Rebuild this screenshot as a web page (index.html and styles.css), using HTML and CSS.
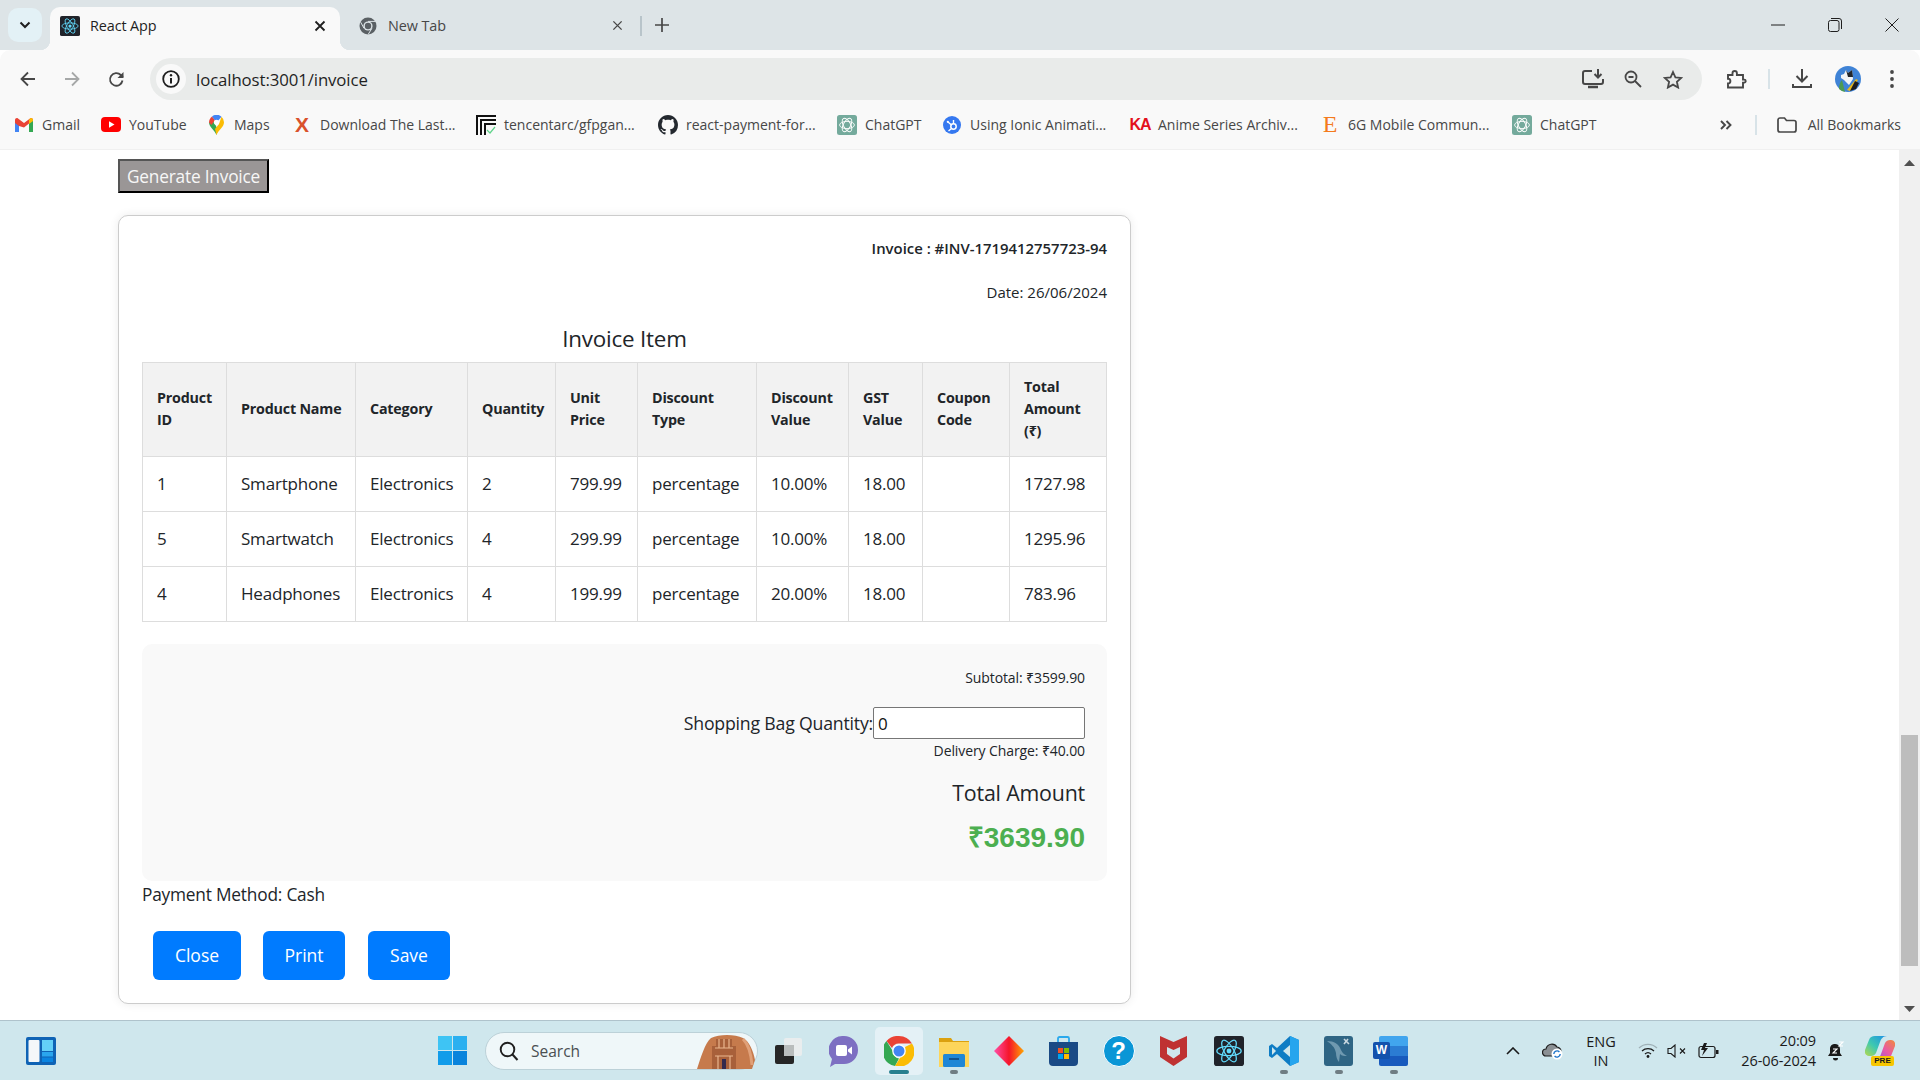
FILE: index.html
```html
<!DOCTYPE html>
<html lang="en">
<head>
<meta charset="utf-8">
<title>React App</title>
<link rel="stylesheet" href="styles.css">
</head>
<body>
<svg class="defs" width="0" height="0" aria-hidden="true">
  <symbol id="atom" viewBox="0 0 32 32">
    <rect width="32" height="32" rx="3" fill="#20232a"/>
    <g fill="none" stroke="#61dafb" stroke-width="1.3">
      <ellipse cx="16" cy="16" rx="13" ry="5"/>
      <ellipse cx="16" cy="16" rx="13" ry="5" transform="rotate(60 16 16)"/>
      <ellipse cx="16" cy="16" rx="13" ry="5" transform="rotate(120 16 16)"/>
    </g>
    <circle cx="16" cy="16" r="2.6" fill="#61dafb"/>
  </symbol>
  <symbol id="gpt" viewBox="0 0 20 20">
    <rect width="20" height="20" rx="2.5" fill="#74aa9c"/>
    <g fill="none" stroke="#fff" stroke-width=".9">
      <ellipse cx="10" cy="10" rx="7.4" ry="3.6"/>
      <ellipse cx="10" cy="10" rx="7.4" ry="3.6" transform="rotate(60 10 10)"/>
      <ellipse cx="10" cy="10" rx="7.4" ry="3.6" transform="rotate(120 10 10)"/>
    </g>
  </symbol>
</svg>

<header class="tabstrip">
  <div class="tab-menu">
    <svg width="12" height="8" viewBox="0 0 12 8"><path d="M1.5 1.5 6 6l4.5-4.5" fill="none" stroke="#1f1f1f" stroke-width="2"/></svg>
  </div>
  <div class="tab tab-active">
    <svg class="fav" width="20" height="20"><use href="#atom"/></svg>
    <span class="tab-title">React App</span>
    <svg class="tab-x" width="12" height="12" viewBox="0 0 12 12"><path d="M1.5 1.5l9 9m0-9-9 9" stroke="#1f1f1f" stroke-width="1.8"/></svg>
  </div>
  <div class="tab tab-idle">
    <svg class="fav" width="18" height="18" viewBox="0 0 18 18"><circle cx="9" cy="9" r="8.5" fill="#5a6064"/><circle cx="9" cy="9" r="4.6" fill="#dde4e7"/><circle cx="9" cy="9" r="3.2" fill="#5a6064"/><path d="M9 4.4h7.5M5 11.3 1.7 5.2M12.9 11.4l-3.800 6.100" stroke="#dde4e7" stroke-width="1"/></svg>
    <span class="tab-title tab-title-idle">New Tab</span>
    <svg class="tab-x" width="11" height="11" viewBox="0 0 12 12"><path d="M1.5 1.5l9 9m0-9-9 9" stroke="#474747" stroke-width="1.5"/></svg>
  </div>
  <span class="tab-sep"></span>
  <svg class="tab-plus" width="14" height="14" viewBox="0 0 14 14"><path d="M7 0v14M0 7h14" stroke="#474747" stroke-width="1.7"/></svg>
  <div class="win-controls">
    <span class="win-btn"><svg width="14" height="2" viewBox="0 0 14 2"><path d="M0 1h14" stroke="#1f1f1f" stroke-width="1"/></svg></span>
    <span class="win-btn"><svg width="14" height="14" viewBox="0 0 14 14"><rect x=".5" y="2.5" width="10.5" height="11" rx="2" fill="none" stroke="#1f1f1f"/><path d="M3 .5h8a2.5 2.5 0 0 1 2.5 2.5v8" fill="none" stroke="#1f1f1f"/></svg></span>
    <span class="win-btn"><svg width="14" height="14" viewBox="0 0 14 14"><path d="M.5.5l13 13m0-13-13 13" stroke="#1f1f1f" stroke-width="1"/></svg></span>
  </div>
</header>

<nav class="toolbar">
  <span class="tool"><svg width="16" height="16" viewBox="0 0 16 16"><path d="M15 8H2M8 1.5 1.5 8 8 14.5" fill="none" stroke="#474747" stroke-width="1.8"/></svg></span>
  <span class="tool"><svg width="16" height="16" viewBox="0 0 16 16"><path d="M1 8h13M8 1.5 14.5 8 8 14.5" fill="none" stroke="#a6a8a8" stroke-width="1.8"/></svg></span>
  <span class="tool"><svg width="17" height="17" viewBox="0 0 17 17"><path d="M14.5 9.5A6.300 6.300 0 1 1 12.800 4L15 6" fill="none" stroke="#474747" stroke-width="1.8"/><path d="M15.5 1v6h-6z" fill="#474747"/></svg></span>
  <div class="omnibox">
    <span class="omni-info"><svg width="18" height="18" viewBox="0 0 18 18"><circle cx="9" cy="9" r="7.8" fill="none" stroke="#1f1f1f" stroke-width="1.8"/><path d="M9 8v5.5" stroke="#1f1f1f" stroke-width="2"/><circle cx="9" cy="5.3" r="1.2" fill="#1f1f1f"/></svg></span>
    <span class="omni-url">localhost:3001/invoice</span>
    <div class="omni-actions">
      <span class="omni-act"><svg width="22" height="20" viewBox="0 0 22 20"><path d="M10 2H3a2 2 0 0 0-2 2v9a2 2 0 0 0 2 2h16a2 2 0 0 0 2-2v-3" fill="none" stroke="#474747" stroke-width="2"/><path d="M6 18h10" stroke="#474747" stroke-width="2.5"/><path d="M16 0v8M12.5 5l3.500 3.500L19.5 5" fill="none" stroke="#474747" stroke-width="2"/></svg></span>
      <span class="omni-act"><svg width="18" height="18" viewBox="0 0 18 18"><circle cx="7" cy="7" r="5.5" fill="none" stroke="#474747" stroke-width="1.8"/><path d="M4.5 7h5M11 11l6 6" stroke="#474747" stroke-width="1.8"/></svg></span>
      <span class="omni-act"><svg width="20" height="19" viewBox="0 0 20 19"><path d="m10 2 2.400 5.300 5.800.6-4.300 3.900 1.200 5.700L10 14.600l-5.100 2.900 1.200-5.700L1.800 7.900l5.800-.6z" fill="none" stroke="#474747" stroke-width="1.8"/></svg></span>
    </div>
  </div>
  <span class="tool tool-ext"><svg width="21" height="20" viewBox="0 0 21 20"><path d="M2 6h4.500V4.200a2.200 2.200 0 0 1 4.400 0V6H17v4.600h1.200a1.500 1.500 0 0 1 0 3H17v4.900H2v-4a2.400 2.400 0 0 0 0-4.800z" fill="none" stroke="#474747" stroke-width="1.9"/></svg></span>
  <span class="tool-sep"></span>
  <span class="tool tool-dl"><svg width="20" height="20" viewBox="0 0 20 20"><path d="M10 0v12M4.5 7l5.500 5.500L15.5 7" fill="none" stroke="#474747" stroke-width="2"/><path d="M1 15v3h18v-3" fill="none" stroke="#474747" stroke-width="2"/></svg></span>
  <span class="tool tool-av"><svg width="26" height="26" viewBox="0 0 26 26"><circle cx="13" cy="13" r="13" fill="#3f83d6"/><path d="M4 23c0-4 1-7 3-9l3 12a13 13 0 0 1-6-3z" fill="#4d9a52"/><path d="M6 9l3-1 2-4 2 3 4-3 1 9-4 6-5-5-3-2z" fill="#f2f4f6"/><path d="M11 4l2 3 4-3 1 7-5 0z" fill="#23262b"/><path d="M12 24l9-11 2 1-8 11z" fill="#e8b91c"/><path d="M20 15l4 2-3 6-6 2z" fill="#1d1d20"/></svg></span>
  <span class="tool tool-more"><svg width="4" height="18" viewBox="0 0 4 18"><circle cx="2" cy="2" r="1.9" fill="#474747"/><circle cx="2" cy="9" r="1.9" fill="#474747"/><circle cx="2" cy="16" r="1.9" fill="#474747"/></svg></span>
</nav>

<nav class="bookmarks">
  <div class="bm-list">
    <a class="bm"><span class="bm-ico"><svg width="18" height="14" viewBox="0 0 18 14"><path fill="#4285f4" d="M0 14V2l4 3v9z"/><path fill="#34a853" d="M14 14V5l4-3v12z"/><path fill="#ea4335" d="M4 8 0 5V2C0 .4 1.800-.5 3 .5l6 4.500 6-4.500c1.200-1 3-.1 3 1.500v.5l-4 3-5 4z"/><path fill="#fbbc04" d="M14 2l1-1.500C16.200-.5 18 .4 18 2v1l-4 3z"/></svg></span><span>Gmail</span></a>
    <a class="bm"><span class="bm-ico"><svg width="20" height="15" viewBox="0 0 20 15"><rect width="20" height="15" rx="4" fill="#f00"/><path d="M8 4.3v6.400l5.500-3.200z" fill="#fff"/></svg></span><span>YouTube</span></a>
    <a class="bm"><span class="bm-ico"><svg width="15" height="20" viewBox="0 0 15 20"><path d="M7.5 20C6 15.500 0 12 0 7.200L4 5l4.500 9z" fill="#34a853"/><path d="M0 7.5A7.500 7.500 0 0 1 3 1.500L6 5 2.500 10z" fill="#ea4335"/><path d="M3 1.5A7.500 7.500 0 0 1 12.500 1.700L7.500 7.500z" fill="#4285f4"/><path d="M12.5 1.7A7.500 7.500 0 0 1 15 7.200C15 12 9 15.500 7.500 20L6 14l4-5z" fill="#fbbc04"/><circle cx="7.5" cy="7.3" r="2.6" fill="#fff"/></svg></span><span>Maps</span></a>
    <a class="bm"><span class="bm-ico fav-x">X</span><span>Download The Last...</span></a>
    <a class="bm"><span class="bm-ico"><svg width="20" height="20" viewBox="0 0 20 20"><path d="M0 20V0h20v2H2v18zM4 20V4h16v2H6v14zM8 20V8h12v2h-10v10z" fill="#111"/><path d="M11 15l3 3 5-6" fill="none" stroke="#5fd38a" stroke-width="1.2"/></svg></span><span>tencentarc/gfpgan...</span></a>
    <a class="bm"><span class="bm-ico"><svg width="20" height="20" viewBox="0 0 16 16"><path fill="#24292f" d="M8 0C3.580 0 0 3.580 0 8c0 3.540 2.290 6.530 5.470 7.590.4.070.55-.17.55-.38 0-.19-.01-.82-.01-1.490-2.010.37-2.530-.49-2.690-.94-.09-.23-.48-.94-.82-1.130-.28-.15-.68-.52-.01-.53.63-.01 1.080.58 1.230.82.72 1.210 1.870.87 2.330.66.070-.52.28-.87.51-1.070-1.780-.2-3.640-.89-3.640-3.950 0-.87.31-1.590.82-2.150-.08-.2-.36-1.020.08-2.120 0 0 .67-.21 2.200.82.64-.18 1.320-.27 2-.27.68 0 1.360.09 2 .27 1.530-1.040 2.200-.82 2.200-.82.44 1.100.16 1.920.08 2.120.51.56.82 1.270.82 2.150 0 3.070-1.870 3.750-3.650 3.950.29.25.54.73.54 1.480 0 1.070-.01 1.930-.01 2.200 0 .21.15.46.55.38A8.013 8.013 0 0 0 16 8c0-4.420-3.580-8-8-8z"/></svg></span><span>react-payment-for...</span></a>
    <a class="bm"><span class="bm-ico"><svg width="20" height="20"><use href="#gpt"/></svg></span><span>ChatGPT</span></a>
    <a class="bm"><span class="bm-ico"><svg width="18" height="18" viewBox="0 0 18 18"><circle cx="9" cy="9" r="9" fill="#3578f0"/><circle cx="10.5" cy="10.5" r="2.7" fill="none" stroke="#fff" stroke-width="1.5"/><path d="M10.500 8V4M8.500 12.500 5.500 15M8.500 9l-3.500-3" stroke="#fff" stroke-width="1.4"/><circle cx="4.8" cy="5.8" r="1.1" fill="#fff"/></svg></span><span>Using Ionic Animati...</span></a>
    <a class="bm"><span class="bm-ico fav-ka">KA</span><span>Anime Series Archiv...</span></a>
    <a class="bm"><span class="bm-ico fav-e">E</span><span>6G Mobile Commun...</span></a>
    <a class="bm"><span class="bm-ico"><svg width="20" height="20"><use href="#gpt"/></svg></span><span>ChatGPT</span></a>
  </div>
  <svg class="bm-more" width="12" height="10" viewBox="0 0 12 10"><path d="M1 1l4 4-4 4M6.500 1l4 4-4 4" fill="none" stroke="#474747" stroke-width="1.9"/></svg>
  <span class="bm-sep"></span>
  <a class="bm bm-all"><svg width="20" height="16" viewBox="0 0 20 16"><path d="M1 3a2 2 0 0 1 2-2h4.500l2 2.500H17a2 2 0 0 1 2 2V13a2 2 0 0 1-2 2H3a2 2 0 0 1-2-2z" fill="none" stroke="#474747" stroke-width="1.7"/></svg><span>All Bookmarks</span></a>
</nav>

<main class="viewport">
  <div class="page">
    <button class="gen-btn" type="button">Generate Invoice</button>
    <section class="card">
      <p class="inv-no">Invoice : #INV-1719412757723-94</p>
      <p class="inv-date">Date: 26/06/2024</p>
      <h2 class="inv-title">Invoice Item</h2>
      <table class="items">
        <colgroup>
          <col class="c1"><col class="c2"><col class="c3"><col class="c4"><col class="c5"><col class="c6"><col class="c7"><col class="c8"><col class="c9"><col class="c10">
        </colgroup>
        <thead>
          <tr><th>Product ID</th><th>Product Name</th><th>Category</th><th>Quantity</th><th>Unit Price</th><th>Discount Type</th><th>Discount Value</th><th>GST Value</th><th>Coupon Code</th><th>Total Amount (₹)</th></tr>
        </thead>
        <tbody>
          <tr><td>1</td><td>Smartphone</td><td>Electronics</td><td>2</td><td>799.99</td><td>percentage</td><td>10.00%</td><td>18.00</td><td></td><td>1727.98</td></tr>
          <tr><td>5</td><td>Smartwatch</td><td>Electronics</td><td>4</td><td>299.99</td><td>percentage</td><td>10.00%</td><td>18.00</td><td></td><td>1295.96</td></tr>
          <tr><td>4</td><td>Headphones</td><td>Electronics</td><td>4</td><td>199.99</td><td>percentage</td><td>20.00%</td><td>18.00</td><td></td><td>783.96</td></tr>
        </tbody>
      </table>
      <div class="summary">
        <p class="sum-sub">Subtotal: ₹3599.90</p>
        <label class="sum-bag">Shopping Bag Quantity:<input class="bag-input" type="text" value="0"></label>
        <p class="sum-del">Delivery Charge: ₹40.00</p>
        <p class="sum-total">Total Amount</p>
        <p class="sum-amount">₹3639.90</p>
      </div>
      <p class="pay">Payment Method: Cash</p>
      <div class="actions">
        <button class="act act-close" type="button">Close</button>
        <button class="act act-print" type="button">Print</button>
        <button class="act act-save" type="button">Save</button>
      </div>
    </section>
  </div>
  <aside class="scrollbar">
    <svg class="sb-up" width="11" height="6" viewBox="0 0 11 6"><path d="M5.5 0 11 6H0z" fill="#505050"/></svg>
    <span class="sb-thumb"></span>
    <svg class="sb-down" width="11" height="6" viewBox="0 0 11 6"><path d="M5.5 6 11 0H0z" fill="#505050"/></svg>
  </aside>
</main>

<footer class="taskbar">
  <span class="tb-widget"><svg width="30" height="28" viewBox="0 0 30 28"><rect width="30" height="28" rx="2" fill="#0f63b5"/><rect x="2.5" y="3" width="11" height="22" rx="1" fill="#f4f7f9"/><rect x="16" y="3" width="11" height="11" fill="#63d0f8"/><rect x="16" y="15" width="11" height="4.5" fill="#2aa6ee"/><rect x="16" y="20.5" width="11" height="4.5" fill="#0a84e0"/></svg></span>
  <span class="tb-start"><svg width="29" height="29" viewBox="0 0 29 29"><rect width="14" height="14" fill="#3ec4f4"/><rect x="15" width="14" height="14" fill="#2bb0f0"/><rect y="15" width="14" height="14" fill="#119cea"/><rect x="15" y="15" width="14" height="14" fill="#0a84dc"/></svg></span>
  <div class="tb-search">
    <svg width="20" height="20" viewBox="0 0 20 20"><circle cx="8.5" cy="8.5" r="6.8" fill="none" stroke="#1f1f1f" stroke-width="1.9"/><path d="M13.500 13.500 18.500 19" stroke="#1f1f1f" stroke-width="2"/></svg>
    <span class="tb-search-text">Search</span>
    <svg class="tb-petra" width="58" height="34" viewBox="0 0 58 34"><path d="M0 34C4 22 8 8 14 3c8-4 24-4 32 0 6 3 10 12 12 22l-3 9z" fill="#c67a4c"/><path d="M15 34V11h4V4h16v7h4v23z" fill="#a8603a"/><path d="M18 13h18M18 21h18M22 4v9M32 4v9M21 21v13M33 21v13M27 4v9" stroke="#e9b58d" stroke-width="1.2"/><rect x="25" y="24" width="4" height="10" fill="#342a4d"/><path d="M46 4c5 5 8 14 9 26" stroke="#e0a078" stroke-width="3" fill="none"/></svg>
  </div>
  <div class="tb-apps">
    <span class="tb-app"><svg width="27" height="26" viewBox="0 0 27 26"><rect x="9" width="18" height="18" rx="2" fill="#e9edee"/><rect y="7" width="19" height="19" rx="2" fill="#262626"/><rect x="9" y="7" width="10" height="11" fill="#b9bdbd"/></svg></span>
    <span class="tb-app"><svg width="30" height="32" viewBox="0 0 30 32"><path d="M15 1a14 14 0 0 1 0 28H6l-5 3 2-8a14 14 0 0 1 12-23z" fill="#7d6fc2"/><rect x="7" y="10" width="11" height="11" rx="2" fill="#fff"/><path d="M19 14.500l4-3v8l-4-3z" fill="#fff"/></svg></span>
    <span class="tb-app tb-app-on"><span class="tb-tile"><svg width="30" height="30" viewBox="0 0 30 30"><path d="M15 0a15 15 0 0 1 13 7.500H15a7.500 7.500 0 0 0-7 4.500L2.500 5A15 15 0 0 1 15 0z" fill="#ea4335"/><path d="M2.500 5 9 15.500A7.500 7.500 0 0 0 15 22.500L11 30A15 15 0 0 1 2.500 5z" fill="#34a853"/><path d="M28 7.500A15 15 0 0 1 11 30l6.500-10.500A7.500 7.500 0 0 0 21 11z" fill="#fbbc04"/><circle cx="15" cy="15" r="6.8" fill="#fff"/><circle cx="15" cy="15" r="5.5" fill="#4285f4"/></svg></span></span>
    <span class="tb-app tb-app-dot"><svg width="30" height="32" viewBox="0 0 30 32"><path d="M0 3h12l2 3h16v26H0z" fill="#dba10f"/><path d="M0 7h30v25H0z" fill="#fdd55a"/><rect x="4" y="19" width="22" height="13" rx="1.5" fill="#1f87d6"/><path d="M10 24h10" stroke="#0a3d72" stroke-width="1.4"/></svg></span>
    <span class="tb-app"><svg width="30" height="30" viewBox="0 0 30 30"><defs><linearGradient id="dia" x1="0" x2="1" y1="0" y2="0"><stop offset="0" stop-color="#ff4fa8"/><stop offset=".5" stop-color="#f5152a"/><stop offset="1" stop-color="#ffa600"/></linearGradient></defs><path d="M15 0l15 15-15 15L0 15z" fill="url(#dia)"/></svg></span>
    <span class="tb-app"><svg width="29" height="30" viewBox="0 0 29 30"><path d="M9 6V2.500A1.500 1.500 0 0 1 10.500 1h8A1.500 1.500 0 0 1 20 2.500V6" fill="none" stroke="#2aa9ec" stroke-width="1.8"/><path d="M0 6h29v20a4 4 0 0 1-4 4H4a4 4 0 0 1-4-4z" fill="#1a4a85"/><rect x="9" y="12" width="5" height="5" fill="#f25022"/><rect x="15" y="12" width="5" height="5" fill="#7fba00"/><rect x="9" y="18" width="5" height="5" fill="#00a4ef"/><rect x="15" y="18" width="5" height="5" fill="#ffb900"/></svg></span>
    <span class="tb-app tb-help">?</span>
    <span class="tb-app"><svg width="27" height="30" viewBox="0 0 27 30"><path d="M0 0l13.500 6L27 0v21l-13.500 9L0 21z" fill="#bf3232"/><path d="M7 11l6.500 3L20 11v7l-6.500 4.500L7 18z" fill="#cfe7ed"/></svg></span>
    <span class="tb-app"><svg width="30" height="30"><use href="#atom"/></svg></span>
    <span class="tb-app tb-app-dot"><svg width="30" height="30" viewBox="0 0 30 30"><path d="M21 0l9 4v22l-9 4-13-12-5 4-3-2v-10l3-2 5 4z" fill="#0e7cc4"/><path d="M21 0l9 4v22l-9 4z" fill="#26a5ee"/><path d="M21 9l-7 6 7 6z" fill="#cfe7ed"/><path d="M3 11l4 4-4 4z" fill="#cfe7ed"/></svg></span>
    <span class="tb-app tb-app-dot"><svg width="29" height="30" viewBox="0 0 29 30"><rect width="29" height="30" rx="3" fill="#2f6584"/><path d="M3 5c7 0 12 3 14 9 1 3 4 5 6 6-3 0-5 0-7-2l-1 8c-2-2-3-6-3-9C11 11 7 8 3 5z" fill="#6f99b0"/><path d="M20 3l5 5M24 3l-4 5" stroke="#c8d8e0" stroke-width="1.6"/></svg></span>
    <span class="tb-app tb-app-dot"><span class="tb-word"><span class="tb-word-w">W</span></span></span>
  </div>
  <div class="tray">
    <span class="tr tr-chev"><svg width="14" height="8" viewBox="0 0 14 8"><path d="M1 7l6-6 6 6" fill="none" stroke="#1a1a1a" stroke-width="1.6"/></svg></span>
    <span class="tr tr-cloud"><svg width="22" height="18" viewBox="0 0 22 18"><path d="M4 14a3.500 3.500 0 0 1 0-7 6 6 0 0 1 11-2 4.500 4.500 0 0 1 4 5l-2 4z" fill="#8b9094" stroke="#1f1f1f" stroke-width="1.2"/><circle cx="15" cy="12" r="5.5" fill="#fff"/><path d="M11.800 12a3.200 3.200 0 0 1 5.600-2M18.200 12a3.200 3.200 0 0 1-5.600 2" fill="none" stroke="#1a73c9" stroke-width="1.4"/></svg></span>
    <span class="tr tr-lang"><span>ENG</span><span>IN</span></span>
    <span class="tr tr-wifi"><svg width="20" height="15" viewBox="0 0 20 15"><path d="M1 5a13 13 0 0 1 18 0" fill="none" stroke="#9fb1b7" stroke-width="1.3"/><path d="M4 8a9 9 0 0 1 12 0M7 11a4.500 4.500 0 0 1 6 0" fill="none" stroke="#1a1a1a" stroke-width="1.3"/><circle cx="10" cy="13.5" r="1.4" fill="#1a1a1a"/></svg></span>
    <span class="tr tr-sound"><svg width="20" height="14" viewBox="0 0 20 14"><path d="M1 4.500h3L8 1v12L4 9.500H1z" fill="none" stroke="#1a1a1a" stroke-width="1.1"/><path d="M13 4.500l5 5m0-5-5 5" stroke="#1a1a1a" stroke-width="1.1"/></svg></span>
    <span class="tr tr-batt"><svg width="21" height="16" viewBox="0 0 21 16"><rect x="1" y="3.5" width="16" height="11" rx="2" fill="none" stroke="#1a1a1a" stroke-width="1.2"/><rect x="18" y="7" width="2.5" height="4" fill="#1a1a1a"/><path d="M6 0 3 7h3l-2 6 6-8H7l2-5z" fill="#1a1a1a"/></svg></span>
    <span class="tr tr-clock"><span>20:09</span><span>26-06-2024</span></span>
    <span class="tr tr-bell"><svg width="18" height="20" viewBox="0 0 18 20"><path d="M7 3a5 5 0 0 1 6 5v4l2 3H1l2-3V7a5 5 0 0 1 4-4z" fill="#1a1a1a"/><path d="M6 17h5a2.500 2.500 0 0 1-5 0z" fill="#1a1a1a"/><path d="M6 8h4l-4 4h4M12 1h4l-4 4h4" fill="none" stroke="#fff" stroke-width="1.1"/></svg></span>
    <span class="tr tr-copilot">
      <svg width="30" height="24" viewBox="0 0 30 24"><defs><linearGradient id="copa" x1="1" x2="0" y1="0" y2="1"><stop offset="0" stop-color="#1b8ee8"/><stop offset=".55" stop-color="#3ec9b0"/><stop offset="1" stop-color="#b6d94c"/></linearGradient><linearGradient id="copb" x1="1" x2="0" y1="0" y2="1"><stop offset="0" stop-color="#f08a3c"/><stop offset=".5" stop-color="#e858a8"/><stop offset="1" stop-color="#7a5ce0"/></linearGradient></defs><path d="M10 0h12c-4 0-6 3-7 6l-4 11c-1 2-3 3-5 3H4c-3 0-5-3-4-6l4-10c1-3 3-4 6-4z" fill="url(#copa)"/><path d="M20 24H9c4 0 6-3 7-6l4-11c1-2 3-3 5-3h1c3 0 5 3 4 6l-4 10c-1 3-3 4-6 4z" fill="url(#copb)"/></svg>
      <span class="tr-pre">PRE</span>
    </span>
  </div>
</footer>
</body>
</html>
```

FILE: styles.css
```css
* { box-sizing: border-box; }
html, body { margin: 0; padding: 0; }
body {
  width: 1920px;
  height: 1080px;
  overflow: hidden;
  display: flex;
  flex-direction: column;
  background: #fff;
  font-family: "Open Sans", "Noto Sans", "Liberation Sans", sans-serif;
  color: #212529;
}
.defs { position: absolute; }
svg { display: block; flex: none; }

/* tab strip */
.tabstrip { height: 50px; flex: none; display: flex; align-items: flex-start; background: #dde4e7; }
.tab-menu { width: 34px; height: 34px; margin: 8px 0 0 8px; border-radius: 10px; background: #e3f1f6; display: flex; align-items: center; justify-content: center; }
.tab { width: 290px; height: 43px; margin-top: 7px; display: flex; align-items: center; padding: 0 14px 6px 10px; position: relative; }
.tab-active { margin-left: 8px; background: #f9f9f9; border-radius: 10px 10px 0 0; }
.tab-active::before, .tab-active::after { content: ""; position: absolute; bottom: 0; width: 10px; height: 10px; }
.tab-active::before { left: -10px; background: radial-gradient(circle at 0 0, transparent 10px, #f9f9f9 10.5px); }
.tab-active::after { right: -10px; background: radial-gradient(circle at 100% 0, transparent 10px, #f9f9f9 10.5px); }
.tab-idle { width: 301px; padding-left: 19px; padding-right: 18px; }
.fav { margin-right: 10px; }
.tab-idle .fav { margin-right: 11px; }
.tab-title { font-size: 14.4px; color: #1f1f1f; letter-spacing: -.1px; flex: 1; }
.tab-title-idle { color: #474747; }
.tab-sep { width: 2px; height: 20px; margin: 16px 0 0 -1px; background: #b8c4ca; }
.tab-plus { margin: 18px 0 0 13px; }
.win-controls { margin-left: auto; display: flex; height: 50px; }
.win-btn { width: 57px; height: 50px; display: flex; align-items: center; justify-content: center; }

/* toolbar */
.toolbar { height: 50px; flex: none; display: flex; align-items: center; background: #f9f9f9; border-radius: 10px 10px 0 0; padding: 8px 0 0 6px; }
.tool { width: 44px; height: 42px; display: flex; align-items: center; justify-content: center; flex: none; }
.omnibox { width: 1552px; height: 42px; margin-left: 12px; border-radius: 21px; background: #e9ebea; display: flex; align-items: center; padding: 0 9px 0 6px; }
.omni-info { width: 30px; height: 30px; border-radius: 50%; background: #f9f9f9; display: flex; align-items: center; justify-content: center; }
.omni-url { margin-left: 10px; font-size: 16.8px; color: #1f1f1f; letter-spacing: -.1px; }
.omni-actions { margin-left: auto; display: flex; }
.omni-act { width: 40px; height: 40px; display: flex; align-items: center; justify-content: center; }
.tool-ext { width: 40px; margin-left: 14px; }
.tool-sep { width: 2px; height: 20px; margin-left: 12px; background: #d8e3e8; flex: none; }
.tool-dl { width: 40px; margin-left: 12px; }
.tool-av { width: 40px; margin-left: 6px; }
.tool-more { width: 40px; margin-left: 4px; }

/* bookmarks */
.bookmarks { height: 50px; flex: none; display: flex; align-items: center; background: #f9f9f9; border-bottom: 1px solid #f0f0f0; padding: 0 19px 0 14px; font-size: 14px; color: #474747; }
.bm-list { display: flex; }
.bm { display: flex; align-items: center; gap: 8px; white-space: nowrap; letter-spacing: 0; }
.bm-list .bm:nth-child(1) { width: 87px; }
.bm-list .bm:nth-child(2) { width: 105px; }
.bm-list .bm:nth-child(3) { width: 86px; }
.bm-list .bm:nth-child(4) { width: 184px; }
.bm-list .bm:nth-child(5) { width: 182px; }
.bm-list .bm:nth-child(6) { width: 179px; }
.bm-list .bm:nth-child(7) { width: 105px; }
.bm-list .bm:nth-child(8) { width: 188px; }
.bm-list .bm:nth-child(9) { width: 190px; }
.bm-list .bm:nth-child(10) { width: 192px; }
.bm-ico { width: 20px; height: 20px; flex: none; display: flex; align-items: center; justify-content: center; }
.fav-x { color: #d9512c; font: 700 21px "Liberation Sans", sans-serif; }
.fav-ka { color: #e3101c; font: 700 16px "Liberation Sans", sans-serif; letter-spacing: -1px; }
.fav-e { color: #f47a1c; font: 400 24px "Liberation Serif", serif; }
.bm-more { margin-left: auto; }
.bm-sep { width: 2px; height: 20px; margin-left: 23px; background: #d8e3e8; }
.bm-all { margin-left: 20px; gap: 11px; }

/* page */
.viewport { flex: 1; min-height: 0; display: flex; }
.page { flex: 1; min-width: 0; overflow: hidden; padding: 9px 0 0 118px; }
.gen-btn { display: block; width: 151px; height: 34px; padding: 0; border: 2px outset #222; border-color: #555 #000 #000 #555; background: #9a9696; color: #f7f7f7; font: 400 17.3px "Open Sans", sans-serif; letter-spacing: -.2px; }
.card { width: 1013px; height: 789px; margin-top: 22px; padding: 22px 23px 0; border: 1px solid #ccc; border-radius: 10px; background: #fff; box-shadow: 0 0 10px rgba(0,0,0,.08); }
.card p { margin: 0; }
.card .inv-no { height: 20px; line-height: 20px; text-align: right; font-size: 14.9px; font-weight: 600; }
.card .inv-date { height: 20px; line-height: 20px; margin-top: 24px; text-align: right; font-size: 15px; }
.inv-title { height: 30px; line-height: 30px; margin: 22px 0 8px; text-align: center; font-size: 22.4px; font-weight: 500; letter-spacing: -.2px; }
.items { width: 964px; table-layout: fixed; border-collapse: collapse; font-size: 17px; }
.c1 { width: 84px; } .c2 { width: 129px; } .c3 { width: 112px; } .c4 { width: 88px; } .c5 { width: 82px; }
.c6 { width: 119px; } .c7 { width: 92px; } .c8 { width: 74px; } .c9 { width: 87px; } .c10 { width: 97px; }
.items th, .items td { border: 1px solid #ddd; padding: 0 10px 1px 14px; text-align: left; }
.items th { height: 94px; background: #f2f2f2; font-size: 14.3px; font-weight: 700; line-height: 22px; letter-spacing: -.2px; }
.items td { height: 55px; padding-bottom: 2px; white-space: nowrap; letter-spacing: -.2px; }
.summary { height: 237px; margin-top: 22px; padding: 24px 22px 0; border-radius: 10px; background: #f9f9f9; text-align: right; }
.card .sum-sub { height: 20px; line-height: 20px; font-size: 14px; letter-spacing: -.1px; }
.sum-bag { margin-top: 19px; height: 32px; display: flex; justify-content: flex-end; align-items: center; font-size: 17.7px; letter-spacing: -.2px; }
.bag-input { width: 212px; height: 32px; padding: 0 4px; border: 1px solid #767676; border-radius: 2px; background: #fff; font: 400 17px "Open Sans", sans-serif; color: #111; }
.card .sum-del { height: 20px; line-height: 20px; margin-top: 2px; font-size: 14px; letter-spacing: -.1px; }
.card .sum-total { height: 30px; line-height: 30px; margin-top: 17px; font-size: 21.4px; letter-spacing: -.2px; }
.card .sum-amount { height: 36px; margin-top: 12px; font: 700 28px/36px "Liberation Sans", sans-serif; color: #4caf50; }
.card .pay { height: 24px; line-height: 24px; margin-top: 2px; font-size: 17.3px; letter-spacing: -.2px; }
.actions { display: flex; margin: 24px 0 0 11px; gap: 22px; }
.act { height: 49px; padding: 0 0 2px; border: 0; border-radius: 6px; background: #007bff; color: #fff; font: 400 17.5px "Open Sans", sans-serif; }
.act-close { width: 88px; }
.act-print { width: 82px; }
.act-save { width: 82px; margin-left: 1px; }

/* scrollbar */
.scrollbar { width: 21px; flex: none; background: #f0f0f0; display: flex; flex-direction: column; align-items: center; }
.sb-up { margin-top: 10px; }
.sb-thumb { width: 17px; height: 231px; margin-top: 569px; background: #bdbdbd; }
.sb-down { margin-top: 40px; }

/* taskbar */
.taskbar { height: 60px; flex: none; display: flex; align-items: center; border-top: 1px solid #afc3cc; background: #cfe7ed; padding-left: 26px; }
.tb-widget { flex: none; }
.tb-start { margin-left: 382px; flex: none; }
.tb-search { width: 273px; height: 38px; margin-left: 18px; flex: none; border-radius: 19px; border: 1px solid #bcd1d8; background: #eff7f9; display: flex; align-items: center; padding-left: 13px; position: relative; }
.tb-search-text { margin-left: 12px; font-size: 15.5px; color: #4a4f52; }
.tb-petra { position: absolute; right: 2px; bottom: 0; }
.tb-apps { display: flex; margin-left: 3px; flex: none; }
.tb-app { width: 55px; height: 59px; display: flex; align-items: center; justify-content: center; position: relative; flex: none; }
.tb-app-dot::after { content: ""; position: absolute; left: 50%; bottom: 6px; width: 8px; height: 4px; margin-left: -4px; border-radius: 2px; background: #6f7d83; }
.tb-tile { width: 48px; height: 48px; border-radius: 5px; background: #e4f1f6; display: flex; align-items: center; justify-content: center; }
.tb-app-on::after { content: ""; position: absolute; left: 50%; bottom: 6px; width: 20px; height: 4px; margin-left: -10px; border-radius: 2px; background: #27808f; }
.tb-help { font: 700 24px "Liberation Sans", sans-serif; color: #fff; isolation: isolate; }
.tb-help::before { content: ""; position: absolute; left: 12px; top: 14px; width: 30px; height: 30px; border-radius: 50%; background: #0a96d6; border: 1px solid #fff; z-index: -1; }
.tb-word { width: 29px; height: 30px; position: relative; display: block; border-radius: 2px; background: linear-gradient(#41a5ee 0 33%, #2b7cd3 33% 66%, #185abd 66%); }
.tb-word-w { position: absolute; left: -6px; top: 6px; width: 17px; height: 17px; border-radius: 2px; background: #1452ad; color: #fff; font: 700 12px/17px "Liberation Sans", sans-serif; text-align: center; }
.tray { margin-left: auto; display: flex; align-items: center; height: 59px; padding-right: 16px; font-size: 14.5px; color: #1a1a1a; }
.tr { display: flex; align-items: center; justify-content: center; flex: none; }
.tr-chev { width: 40px; }
.tr-cloud { width: 40px; }
.tr-lang { width: 56px; flex-direction: column; line-height: 19px; }
.tr-wifi { width: 38px; }
.tr-sound { width: 20px; }
.tr-batt { width: 42px; }
.tr-clock { width: 87px; flex-direction: column; align-items: flex-end; line-height: 20px; letter-spacing: -.1px; }
.tr-bell { width: 40px; }
.tr-copilot { width: 48px; height: 30px; position: relative; align-items: flex-start; }
.tr-pre { position: absolute; left: 15px; bottom: 0; width: 23px; height: 10px; border-radius: 2px; background: #f7c600; color: #1a1a1a; font: 700 8px/10px "Liberation Sans", sans-serif; text-align: center; }
```
